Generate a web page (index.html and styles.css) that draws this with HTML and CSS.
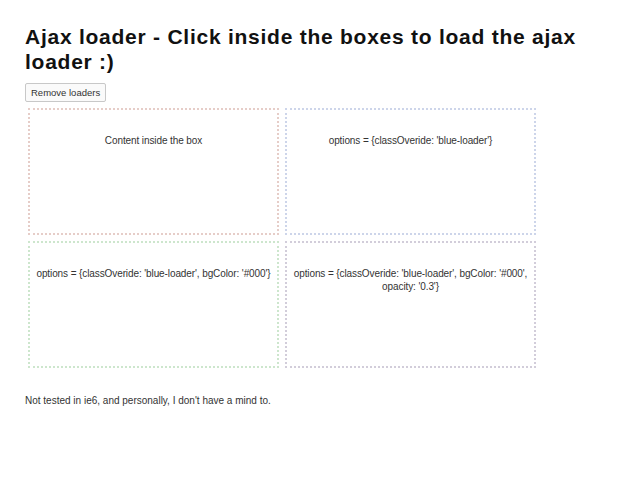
FILE: index.html
```html
<!DOCTYPE html>
<html>
<head>
<meta charset="utf-8">
<link rel="stylesheet" href="styles.css">
</head>
<body>
<h1 class="title">Ajax loader - Click inside the boxes to load the ajax loader :)</h1>
<button class="remove-btn">Remove loaders</button>
<div class="boxes">
  <div class="box box-red">Content inside the box</div>
  <div class="box box-blue">options = {classOveride: 'blue-loader'}</div>
  <div class="box box-green">options = {classOveride: 'blue-loader', bgColor: '#000'}</div>
  <div class="box box-grey">options = {classOveride: 'blue-loader', bgColor: '#000', opacity: '0.3'}</div>
</div>
<p class="note">Not tested in ie6, and personally, I don't have a mind to.</p>
</body>
</html>
```
FILE: styles.css
```css
html, body {
  margin: 0;
  background: #fff;
}
body {
  padding: 24px 25px;
  font-family: "Liberation Sans", Arial, sans-serif;
  color: #222;
}
.title {
  margin: 0 0 9px 0;
  width: 590px;
  font-size: 21px;
  line-height: 25px;
  font-weight: bold;
  letter-spacing: 0.75px;
  color: #111;
}
.remove-btn {
  display: block;
  margin: 0;
  padding: 3px 5px;
  font-family: "Liberation Sans", Arial, sans-serif;
  font-size: 9.5px;
  line-height: 11px;
  color: #333;
  background: #fafafa;
  border: 1px solid #c8c8c8;
  border-radius: 2px;
}
.boxes {
  display: flex;
  flex-wrap: wrap;
  width: 520px;
  margin-top: 3px;
}
.box {
  box-sizing: border-box;
  width: 251px;
  height: 127px;
  margin: 3px;
  padding: 24px 0 0;
  text-align: center;
  font-size: 10px;
  line-height: 13px;
  letter-spacing: -0.1px;
  color: #333;
  border: 2px dotted #ccc;
}
.box-red { border-color: #e6cdc8; }
.box-blue { border-color: #cdd5ea; }
.box-green { border-color: #cde6cd; }
.box-grey { border-color: #d2cdda; }
.note {
  margin: 23px 0 0;
  font-size: 10px;
  line-height: 13px;
  color: #333;
}
```
